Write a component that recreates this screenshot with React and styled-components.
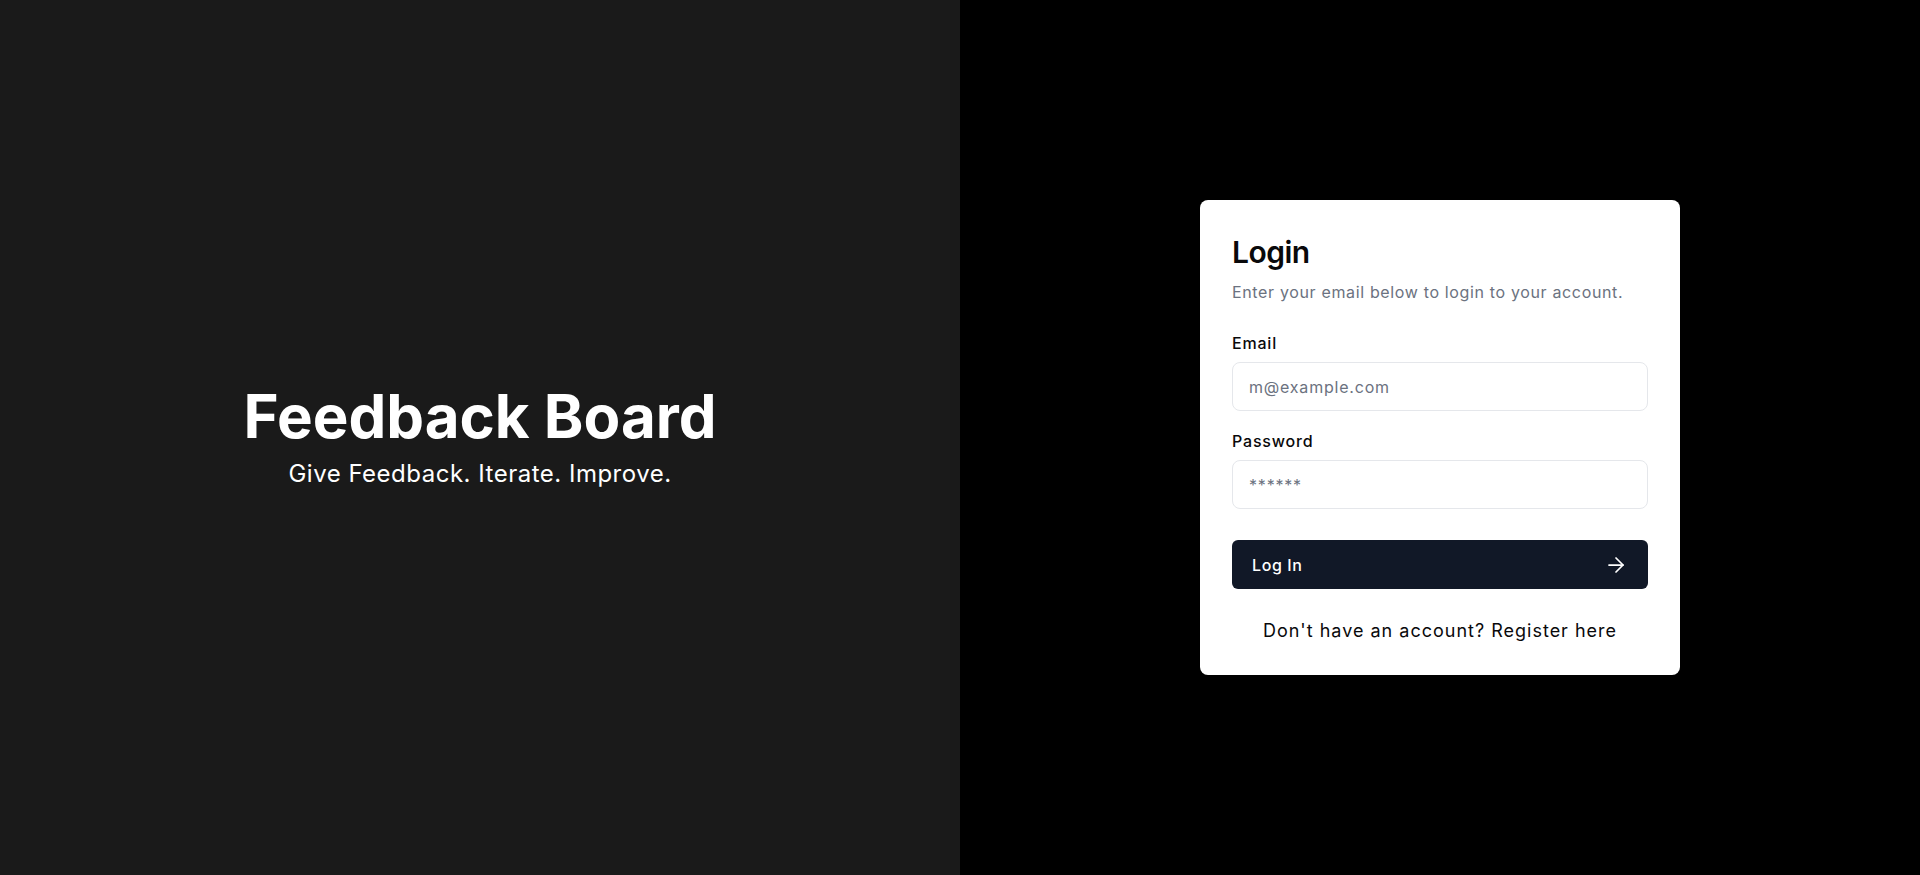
import React, { useState } from 'react'
import styled, { createGlobalStyle } from 'styled-components'
import { ArrowRight } from 'lucide-react'

const GlobalStyle = createGlobalStyle`
  *, *::before, *::after { box-sizing: border-box; }
  html, body { margin: 0; padding: 0; }
  body {
    font-family: Inter, "Noto Sans", "Liberation Sans", sans-serif;
    -webkit-font-smoothing: antialiased;
  }
`

export default function App() {
  const [email, setEmail] = useState('')
  const [password, setPassword] = useState('')

  return <Page>
    <GlobalStyle />
    <Brand>
      <Title>Feedback Board</Title>
      <Tagline>Give Feedback. Iterate. Improve.</Tagline>
    </Brand>
    <Side>
      <Card onSubmit={(e) => e.preventDefault()}>
        <CardTitle>Login</CardTitle>
        <CardText>Enter your email below to login to your account.</CardText>
        <Fields>
          <Field>
            <Label htmlFor="email">Email</Label>
            <Input id="email" type="email" placeholder="m@example.com"
              value={email} onChange={(e) => setEmail(e.target.value)} />
          </Field>
          <Field>
            <Label htmlFor="password">Password</Label>
            <Input id="password" type="password" placeholder="******"
              value={password} onChange={(e) => setPassword(e.target.value)} />
          </Field>
        </Fields>
        <Submit type="submit">
          Log In
          <ArrowRight size={24} strokeWidth={1.75} />
        </Submit>
        <Footer>Don't have an account? <Link href="#">Register here</Link></Footer>
      </Card>
    </Side>
  </Page>
}

const Page = styled.div`
  display: grid;
  grid-template-columns: 1fr 1fr;
  min-height: 100vh;
`
const Brand = styled.div`
  background: #1a1a1a;
  color: #fff;
  display: flex;
  flex-direction: column;
  align-items: center;
  justify-content: center;
`
const Title = styled.h1`
  margin: 0;
  font-size: 60px;
  line-height: 60px;
  font-weight: 700;
`
const Tagline = styled.p`
  margin: 12px 0 0;
  font-size: 24px;
  line-height: 32px;
  letter-spacing: 0.5px;
`
const Side = styled.div`
  background: #000;
  display: flex;
  align-items: center;
  justify-content: center;
`
const Card = styled.form`
  width: 480px;
  background: #fff;
  border-radius: 8px;
  padding: 34px 32px 30px;
  display: flex;
  flex-direction: column;
`
const CardTitle = styled.h2`
  margin: 0;
  font-size: 30px;
  line-height: 36px;
  font-weight: 600;
  color: #09090b;
  letter-spacing: -0.5px;
`
const CardText = styled.p`
  margin: 10px 0 0;
  font-size: 16px;
  line-height: 24px;
  color: #6b7280;
  letter-spacing: 0.65px;
`
const Fields = styled.div`
  margin-top: 27px;
  display: flex;
  flex-direction: column;
  gap: 18px;
`
const Field = styled.div`
  display: flex;
  flex-direction: column;
  gap: 7px;
`
const Label = styled.label`
  font-size: 16px;
  line-height: 24px;
  font-weight: 500;
  color: #09090b;
  letter-spacing: 0.8px;
`
const Input = styled.input`
  height: 49px;
  width: 100%;
  padding: 0 16px;
  border: 1px solid #e5e7eb;
  border-radius: 8px;
  font-family: inherit;
  font-size: 16px;
  letter-spacing: 0.8px;
  color: #09090b;
  background: #fff;
  outline: none;
  &::placeholder { color: #6b7280; }
`
const Submit = styled.button`
  margin-top: 31px;
  height: 49px;
  padding: 0 20px;
  display: flex;
  align-items: center;
  justify-content: space-between;
  background: #111827;
  color: #fff;
  border: none;
  border-radius: 6px;
  font-family: inherit;
  font-size: 16px;
  font-weight: 500;
  letter-spacing: 0.6px;
  cursor: pointer;
`
const Footer = styled.p`
  margin: 28px 0 0;
  text-align: center;
  font-size: 18px;
  line-height: 28px;
  color: #09090b;
  letter-spacing: 1px;
`
const Link = styled.a`
  color: inherit;
  text-decoration: none;
`
